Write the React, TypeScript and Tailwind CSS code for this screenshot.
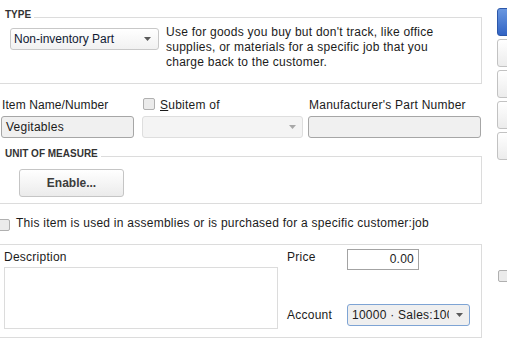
import React from "react";

function Arrow({ color = "#5a5a5a" }: { color?: string }) {
  return (
    <svg width="7" height="4" viewBox="0 0 7 4" className="shrink-0">
      <path d="M0 0 H7 L3.5 4 Z" fill={color} />
    </svg>
  );
}

function Box() {
  return <div className="w-[12px] h-[12px] shrink-0 rounded-[2px] border border-[#b0b0b0] bg-[#ebebeb]" />;
}

export default function App() {
  return (
    <div className="flex w-[507px] h-[352px] overflow-hidden bg-white text-[12px] leading-[15px] tracking-[0.25px] text-[#1b1b1b] font-['Liberation_Sans',Arial,sans-serif]">
      <div className="w-[482px] shrink-0 flex flex-col">
        {/* TYPE group */}
        <div className="relative mt-[17px] h-[67px] border-t border-r border-b border-[#dcdcdc] flex items-start pl-[10px] pt-[7px]">
          <span className="absolute left-0 top-[-9px] bg-white pl-[5px] pr-[3px] text-[10px] leading-[12px] tracking-normal font-bold text-[#333]">
            TYPE
          </span>
          <div className="mt-[3px] w-[149px] h-[22px] shrink-0 flex items-center justify-between pl-[3px] pr-[7px] border border-[#c8c8c8] rounded-[3px] bg-gradient-to-b from-white to-[#f1f1f1] text-[#101a33] tracking-normal">
            <span className="whitespace-nowrap">Non-inventory Part</span>
            <Arrow />
          </div>
          <div className="ml-[7px] whitespace-nowrap">
            Use for goods you buy but don't track, like office
            <br />
            supplies, or materials for a specific job that you
            <br />
            charge back to the customer.
          </div>
        </div>

        {/* Name row */}
        <div className="mt-[14px] flex pl-[1px]">
          <div className="w-[133px] flex flex-col">
            <div className="h-[18px] pl-[1px] whitespace-nowrap tracking-[0.1px]">Item Name/Number</div>
            <div className="h-[22px] flex items-center px-[4px] border border-[#a6a6a6] rounded-[3px] bg-[#f0f0f0]">
              Vegitables
            </div>
          </div>
          <div className="ml-[8px] w-[161px] flex flex-col">
            <div className="h-[18px] flex items-start pl-[1px] gap-[5px] whitespace-nowrap">
              <Box />
              <span>
                <span className="underline">S</span>ubitem of
              </span>
            </div>
            <div className="h-[22px] flex items-center justify-end pr-[6px] border border-[#dedede] rounded-[3px] bg-[#f4f4f4]">
              <Arrow color="#a8a8a8" />
            </div>
          </div>
          <div className="ml-[5px] w-[173px] flex flex-col">
            <div className="h-[18px] pl-[1px] whitespace-nowrap">Manufacturer's Part Number</div>
            <div className="h-[22px] border border-[#a6a6a6] rounded-[3px] bg-[#f0f0f0]" />
          </div>
        </div>

        {/* UNIT OF MEASURE group */}
        <div className="relative mt-[18px] h-[48px] border-t border-r border-b border-[#dcdcdc] pl-[19px] pt-[12px]">
          <span className="absolute left-0 top-[-9px] bg-white pl-[5px] pr-[3px] text-[10px] leading-[12px] tracking-normal font-bold text-[#333] whitespace-nowrap">
            UNIT OF MEASURE
          </span>
          <button className="w-[105px] h-[28px] flex items-center justify-center border border-[#c5c5c5] rounded-[3px] bg-gradient-to-b from-white to-[#ebebeb] font-bold tracking-normal text-[#3c3c3c]">
            Enable...
          </button>
        </div>

        {/* assemblies checkbox */}
        <div className="mt-[12px] flex items-start ml-[-2px] whitespace-nowrap">
          <div className="mt-[3px]">
            <Box />
          </div>
          <span className="ml-[6px]">This item is used in assemblies or is purchased for a specific customer:job</span>
        </div>

        {/* Description / price group */}
        <div className="mt-[13px] h-[94px] border-t border-r border-b border-[#dcdcdc] flex">
          <div className="flex flex-col pl-[4px] pt-[5px]">
            <div className="h-[17px]">Description</div>
            <div className="w-[274px] h-[62px] border border-[#dcdcdc] bg-white" />
          </div>
          <div className="ml-[9px] flex flex-col pt-[4px]">
            <div className="flex items-start">
              <span className="w-[60px] mt-[1px]">Price</span>
              <div className="w-[72px] h-[21px] flex items-center justify-end pr-[4px] border border-[#a3a3a3] bg-white">
                0.00
              </div>
            </div>
            <div className="mt-[34px] flex items-center">
              <span className="w-[60px]">Account</span>
              <div className="w-[123px] h-[22px] flex items-center pl-[4px] pr-[6px] border border-[#7ea4d4] rounded-[3px] bg-[#efefef]">
                <div className="w-[97px] overflow-hidden whitespace-nowrap">10000 · Sales:10000</div>
                <div className="ml-auto">
                  <Arrow />
                </div>
              </div>
            </div>
          </div>
        </div>
      </div>

      {/* right buttons column */}
      <div className="ml-[15px] flex flex-col shrink-0">
        <div className="mt-[8px] w-[80px] h-[28px] rounded-[3px] border border-[#2c57a9] bg-gradient-to-b from-[#6a97e0] to-[#3264c4]" />
        <div className="mt-[3px] w-[80px] h-[28px] rounded-[3px] border border-[#c2c2c2] bg-gradient-to-b from-white to-[#ececec]" />
        <div className="mt-[3px] w-[80px] h-[28px] rounded-[3px] border border-[#c2c2c2] bg-gradient-to-b from-white to-[#ececec]" />
        <div className="mt-[3px] w-[80px] h-[28px] rounded-[3px] border border-[#c2c2c2] bg-gradient-to-b from-white to-[#ececec]" />
        <div className="mt-[3px] w-[80px] h-[28px] rounded-[3px] border border-[#c2c2c2] bg-gradient-to-b from-white to-[#ececec]" />
        <div className="mt-[110px] ml-[1px]">
          <Box />
        </div>
      </div>
    </div>
  );
}
